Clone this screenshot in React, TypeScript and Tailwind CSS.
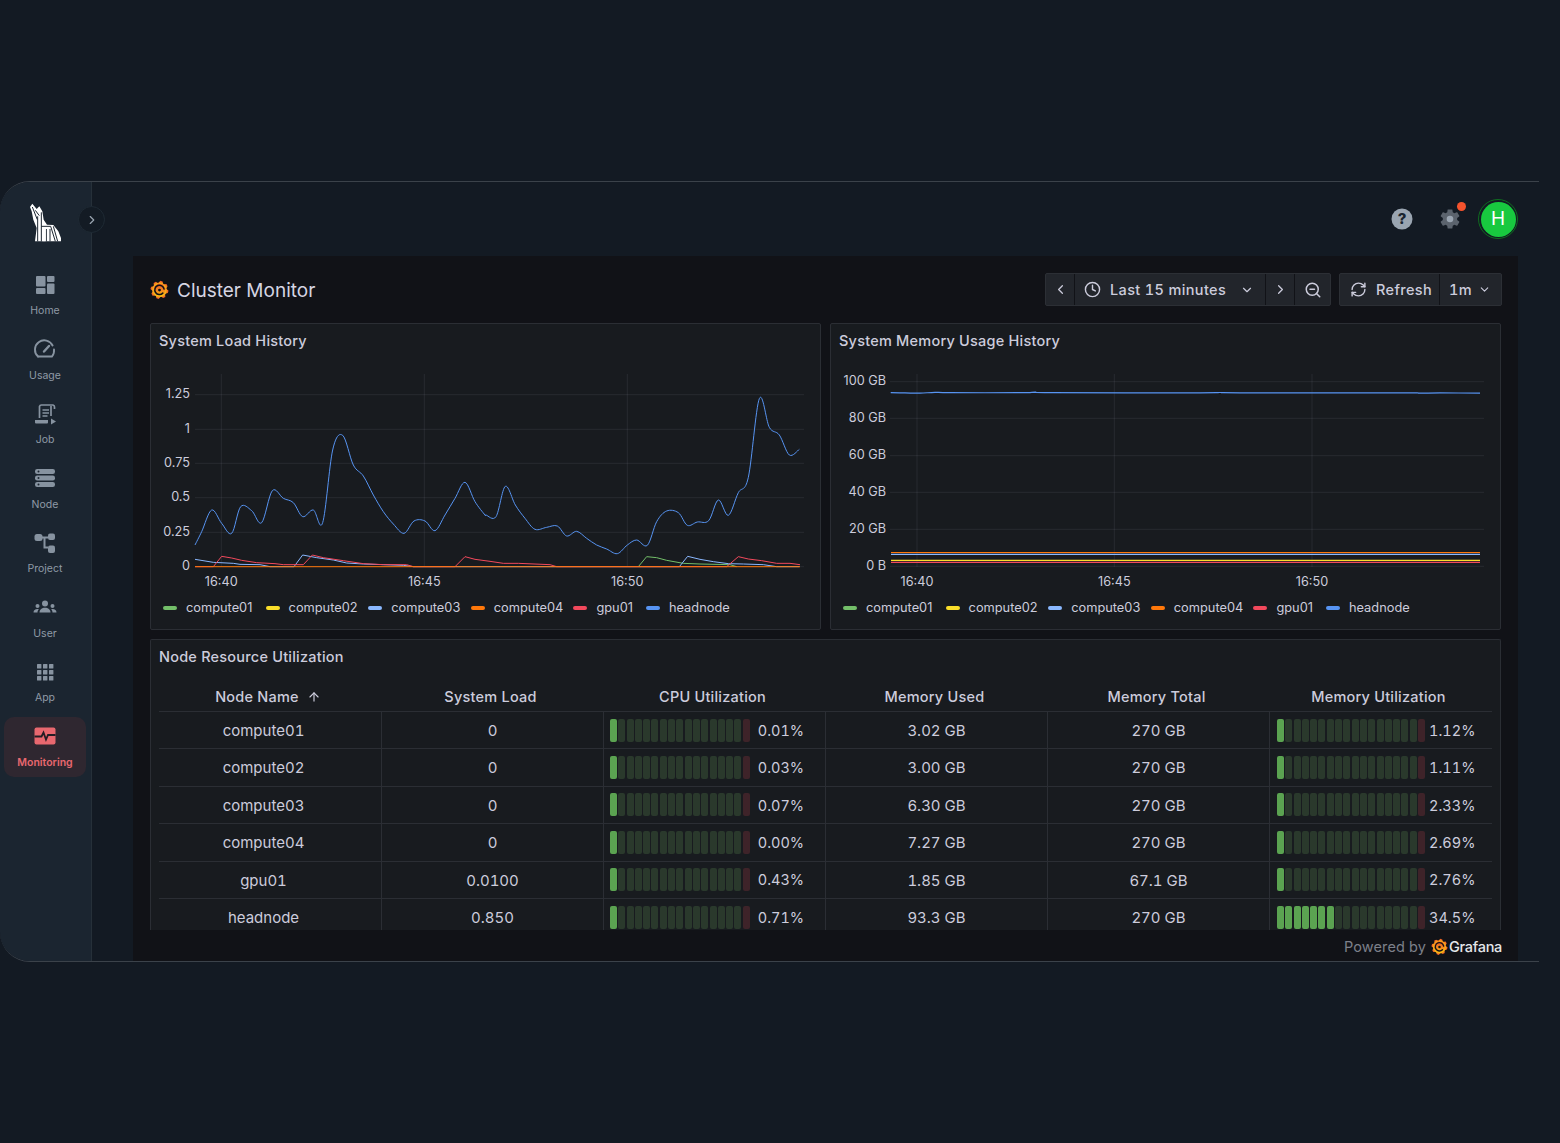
import { ChevronDown, ChevronLeft, ChevronRight, Clock, RefreshCw, ZoomOut, ArrowUp } from 'lucide-react';
import type { ReactNode } from 'react';

type Pt = [number, number];

const COLORS = {
  compute01: '#73bf69',
  compute02: '#fade2a',
  compute03: '#8ab8ff',
  compute04: '#ff780a',
  gpu01: '#f2495c',
  headnode: '#5794f2',
};

// points are read in two crops of the chart, mapped back to page coordinates
const a = (p: number[][]): Pt[] => p.map(([x, y]) => [x / 3 + 150, y / 3 + 370]);
const b = (p: number[][]): Pt[] => p.map(([x, y]) => [x / 3 + 480, y / 3 + 370]);

const headPts: Pt[] = [
  ...a([[135,525],[155,485],[185,420],[215,460],[245,490],[272,410],[305,422],[335,458],[367,362],[400,385],[430,398],[458,440],[490,420],[518,458],[548,240],[578,196],[610,285],[640,318],[670,375],[700,425],[730,462],[762,490],[792,453],[825,453],[855,482],[885,435],[915,385],[945,337],[975,395],[1005,435]]),
  ...b([[18,435],[48,440],[76,349],[106,405],[135,445],[165,478],[200,472],[232,468],[260,498],[290,484],[320,505],[350,525],[380,537],[412,551],[442,525],[470,510],[502,526],[530,455],[560,423],[595,428],[622,466],[652,456],[686,452],[715,390],[745,436],[775,368],[805,322],[838,86],[868,172],[898,195],[928,255],[958,238]]),
];

const gpuPts: Pt[] = [
  ...a([[135,590],[190,590],[215,559],[245,564],[275,571],[320,578],[375,581],[400,584],[460,584],[487,555],[520,563],[580,572],[640,581],[700,584],[770,584],[790,590],[915,590],[945,560],[975,568],[1020,574]]),
  ...b([[70,580],[115,580],[210,584],[230,590],[740,590],[775,560],[805,567],[845,572],[890,580],[930,580],[960,584]]),
];

const c3Pts: Pt[] = [
  ...a([[135,568],[190,577],[250,580],[270,583],[330,584],[360,590],[432,590],[458,555],[500,563],[550,570],[590,579],[640,582],[700,584],[760,586],[790,590]]),
  ...b([[598,590],[623,559],[660,568],[700,575],[745,581],[790,582],[850,584],[890,590],[958,590]]),
];

const c1Pts: Pt[] = b([[475,590],[500,560],[530,563],[560,571],[610,580],[660,582],[750,584],[770,590]]);

function smooth(pts: Pt[]) {
  let d = `M${pts[0][0]} ${pts[0][1]}`;
  for (let i = 0; i < pts.length - 1; i++) {
    const p0 = pts[i - 1] ?? pts[i];
    const p1 = pts[i];
    const p2 = pts[i + 1];
    const p3 = pts[i + 2] ?? p2;
    const c1x = p1[0] + (p2[0] - p0[0]) / 6;
    const c1y = p1[1] + (p2[1] - p0[1]) / 6;
    const c2x = p2[0] - (p3[0] - p1[0]) / 6;
    const c2y = p2[1] - (p3[1] - p1[1]) / 6;
    d += ` C${c1x} ${c1y} ${c2x} ${c2y} ${p2[0]} ${p2[1]}`;
  }
  return d;
}

const straight = (pts: Pt[]) => pts.map((p, i) => `${i ? 'L' : 'M'}${p[0]} ${p[1]}`).join(' ');

function GrafanaLogo({ size }: { size: number }) {
  const teeth = Array.from({ length: 8 }, (_, i) => i * 45 + 10);
  return (
    <svg width={size} height={size} viewBox="0 0 24 24" className="shrink-0">
      <defs>
        <linearGradient id="gf" x1="0.5" y1="0" x2="0.5" y2="1">
          <stop offset="0" stopColor="#ee4f2a" />
          <stop offset="0.55" stopColor="#f58a1f" />
          <stop offset="1" stopColor="#fbc50f" />
        </linearGradient>
      </defs>
      <g fill="url(#gf)">
        <circle cx="12" cy="12.5" r="9.3" />
        {teeth.map((t) => (
          <path key={t} d="M8.8 5 11 1 14 1.5 15.5 5Z" transform={`rotate(${t} 12 12.5)`} />
        ))}
      </g>
      <path d="M17.8 11.5a5.9 5.9 0 1 0-1.6 5.1" fill="none" stroke="#111217" strokeWidth="1.9" strokeLinecap="round" />
      <circle cx="12" cy="12.7" r="1.8" fill="#111217" />
    </svg>
  );
}

function WolfLogo() {
  return (
    <svg width="33" height="39" viewBox="87 100 99 117" className="shrink-0">
      <path d="M90 112 97 102 110 118 118 110 127 125 131 150 141 165 160 166 175 185 183 205 183 215H105L110 175 100 150 95 125Z" fill="#fff" />
      <g fill="none" stroke="#1b2530" strokeWidth="3">
        <path d="M97 112 112 150M106 122 118 138" />
        <path d="M113 140V215M124 128V215" />
        <path d="M124 170 152 170 166 215M139 178V215M150 178V215M160 170 173 215" />
      </g>
      <path d="M127 178H137V215H127Z" fill="#fff" />
    </svg>
  );
}

const icons: Record<string, ReactNode> = {
  Home: (
    <svg width="24" height="24" viewBox="0 0 24 24" fill="#8793a0"><rect x="3" y="3" width="9.5" height="10.5" rx="1" /><rect x="3" y="15" width="9.5" height="6" rx="1" /><rect x="14" y="3" width="7.5" height="6" rx="1" /><rect x="14" y="10.5" width="7.5" height="10.5" rx="1" /></svg>
  ),
  Usage: (
    <svg width="24" height="24" viewBox="0 0 24 24" fill="none" stroke="#8793a0" strokeWidth="1.9" strokeLinecap="round"><path d="M5 19.5a9.3 9.3 0 1 1 14.6-11" /><path d="M21 12.5a9 9 0 0 1-2 7H5" /><path d="m11 14.5 5-5.5" strokeWidth="2.4" /></svg>
  ),
  Job: (
    <svg width="24" height="24" viewBox="0 0 24 24" fill="none" stroke="#8793a0" strokeWidth="1.7"><path d="M6.5 16V4.5A2 2 0 0 1 8.5 3H20a2 2 0 0 1 1.5 2v2" /><path d="M9.5 8h6.5M9.5 11h6.5M9.5 14h5" /><path d="M2 18h13v2.5a1 1 0 0 1-1 1H3a1 1 0 0 1-1-1Z" fill="#8793a0" stroke="none" /><path d="m18 16.5 5 3-5 3Z" fill="#8793a0" stroke="none" /><path d="M18 14V4" /></svg>
  ),
  Node: (
    <svg width="24" height="24" viewBox="0 0 24 24" fill="#8793a0"><rect x="2" y="3" width="20" height="5" rx="2.2" /><rect x="2" y="9.5" width="20" height="5" rx="2.2" /><rect x="2" y="16" width="20" height="5" rx="2.2" /><g fill="#1b2530"><circle cx="5.5" cy="5.5" r="1" /><circle cx="5.5" cy="12" r="1" /><circle cx="5.5" cy="18.5" r="1" /></g></svg>
  ),
  Project: (
    <svg width="24" height="24" viewBox="0 0 24 24" fill="#8793a0"><rect x="1.5" y="3" width="8" height="7" rx="2.5" /><rect x="15" y="2.5" width="7" height="6.5" rx="2" /><rect x="15" y="14.5" width="7" height="7.5" rx="2" /><path d="M9 5.5h6v2h-2.5v8H15v2h-4.5V7.5H9Z" /></svg>
  ),
  User: (
    <svg width="24" height="24" viewBox="0 0 24 24" fill="#8793a0"><circle cx="12" cy="8.5" r="3" /><circle cx="4.5" cy="11" r="2" /><circle cx="19.5" cy="11" r="2" /><path d="M6.5 17.500c0-3 2.500-4.700 5.500-4.700s5.500 1.700 5.500 4.700Z" /><path d="M0.500 17.500c0-2 1.500-3.500 4-3.500.5 0 .9.100 1.300.2-.8.800-1.300 1.900-1.300 3.300Z" /><path d="M23.500 17.500c0-2-1.500-3.500-4-3.500-.5 0-.9.100-1.300.2.800.8 1.300 1.900 1.300 3.300Z" /></svg>
  ),
  App: (
    <svg width="24" height="24" viewBox="0 0 24 24" fill="#8793a0">
      {[4, 10, 16].map((y) => [4, 10, 16].map((x) => <rect key={`${x}-${y}`} x={x} y={y} width="4.4" height="4.4" rx="0.5" />))}
    </svg>
  ),
  Monitoring: (
    <svg width="24" height="24" viewBox="0 0 24 24"><rect x="1.500" y="3.500" width="21" height="17" rx="2" fill="#e8686f" /><path d="M1.500 12.500h7l2-4 2.500 7 2-4.500h7.500" fill="none" stroke="#221d24" strokeWidth="1.800" /></svg>
  ),
};

function SideItem({ label, active }: { label: string; active?: boolean }) {
  return (
    <div className={`ml-1 flex h-[60px] w-[82px] flex-col items-center justify-center gap-[7.5px] rounded-[10px] ${active ? 'bg-[#2f2730]' : ''}`}>
      {icons[label]}
      <span className={`text-[10.5px] leading-[14px] ${active ? 'font-semibold text-[#e8686f]' : 'text-[#8f9aa6]'}`}>{label}</span>
    </div>
  );
}

function Sidebar() {
  const items = ['Home', 'Usage', 'Job', 'Node', 'Project', 'User', 'App'];
  return (
    <aside className="relative flex w-[92px] shrink-0 flex-col border-r border-[#263039] bg-[#1b2530]">
      <div className="flex h-[74px] w-full items-center justify-center pt-[7px]">
        <WolfLogo />
      </div>
      <div className="flex flex-col gap-[4.5px] pt-[9.5px]">
        {items.map((i) => (
          <SideItem key={i} label={i} />
        ))}
        <SideItem label="Monitoring" active />
      </div>
      <div className="absolute top-[24px] left-[78px] flex h-[27px] w-[27px] items-center justify-center rounded-full border border-[#1f2a34] bg-[#131b24]">
        <ChevronRight size={14} className="text-[#9aa5b1]" />
      </div>
    </aside>
  );
}

function TopBar() {
  return (
    <header className="flex h-[74px] shrink-0 items-center justify-end gap-[25px] pr-[21px]">
      <svg width="24" height="24" viewBox="0 0 24 24" className="-mr-[1px]">
        <circle cx="12" cy="12" r="10.5" fill="#9aa5b1" />
        <text x="12" y="17" textAnchor="middle" fontSize="15" fontWeight="800" fill="#1b2530" fontFamily="Inter, sans-serif">?</text>
      </svg>
      <div className="relative">
        <svg width="24" height="24" viewBox="0 0 24 24" className="block">
          <path fill="#5b636d" d="M19.14 12.94c.04-.3.06-.61.06-.94 0-.32-.02-.64-.07-.94l2.03-1.58c.18-.14.23-.41.12-.61l-1.92-3.32c-.12-.22-.37-.29-.59-.22l-2.39.96c-.5-.38-1.03-.7-1.62-.94l-.36-2.54c-.04-.24-.24-.41-.48-.41h-3.84c-.24 0-.43.17-.47.41l-.36 2.54c-.59.24-1.13.57-1.62.94l-2.39-.96c-.22-.08-.47 0-.59.22L2.74 8.87c-.12.21-.08.47.12.61l2.03 1.58c-.05.3-.09.63-.09.94s.02.64.07.94l-2.03 1.58c-.18.14-.23.41-.12.61l1.92 3.32c.12.22.37.29.59.22l2.39-.96c.5.38 1.03.7 1.62.94l.36 2.54c.05.24.24.41.48.41h3.84c.24 0 .44-.17.47-.41l.36-2.54c.59-.24 1.13-.56 1.62-.94l2.39.96c.22.08.47 0 .59-.22l1.92-3.32c.12-.22.07-.47-.12-.61l-2.01-1.58z" />
          <circle cx="12" cy="12" r="3.3" fill="#9aa5b1" />
        </svg>
        <span className="absolute -top-[5px] -right-[4px] h-[9px] w-[9px] rounded-full bg-[#f5532d]" />
      </div>
      <div className="-ml-[9px] flex h-[40px] w-[40px] items-center justify-center rounded-full border border-[#0f6b20] p-[1.5px]">
        <div className="flex h-full w-full items-center justify-center rounded-full bg-[#18c93f] text-[19px] text-white">H</div>
      </div>
    </header>
  );
}

function ToolCell({ children, className = '' }: { children: ReactNode; className?: string }) {
  return <div className={`flex h-full items-center border-l border-[#111217] first:border-l-0 ${className}`}>{children}</div>;
}

function DashHeader() {
  return (
    <div className="flex h-[67px] shrink-0 items-center justify-between text-[#ccccdc]">
      <div className="flex items-center gap-[8px]">
        <GrafanaLogo size={19} />
        <h1 className="pt-[2px] text-[19px] leading-none font-normal text-[#d5d5e3]">Cluster Monitor</h1>
      </div>
      <div className="-mr-[1px] flex items-center gap-[8px] text-[14.5px] font-medium tracking-[0.35px] tabular-nums">
        <div className="flex h-[33px] w-[286px] rounded-[2px] border border-[#2c2f35] bg-[#22252b]">
          <ToolCell className="w-[28px] justify-center"><ChevronLeft size={15} /></ToolCell>
          <ToolCell className="w-[191px] justify-between pr-[11px] pl-[9px]">
            <span className="flex items-center gap-[9px]"><Clock size={17} />Last 15 minutes</span>
            <ChevronDown size={14} />
          </ToolCell>
          <ToolCell className="w-[29px] justify-center"><ChevronRight size={15} /></ToolCell>
          <ToolCell className="flex-1 justify-center"><ZoomOut size={18} /></ToolCell>
        </div>
        <div className="flex h-[33px] w-[163px] rounded-[2px] border border-[#2c2f35] bg-[#22252b]">
          <ToolCell className="w-[99px] gap-[9px] pl-[10px]"><RefreshCw size={17} />Refresh</ToolCell>
          <ToolCell className="flex-1 justify-between pr-[10px] pl-[9px]">1m<ChevronDown size={13} /></ToolCell>
        </div>
      </div>
    </div>
  );
}

function Legend() {
  const names = Object.entries(COLORS);
  return (
    <div className="flex h-[32px] items-center gap-[10.6px] pl-[12px]">
      {names.map(([n, c]) => (
        <div key={n} className="flex items-center gap-[9px]">
          <span className="h-[4px] w-[14px] rounded-full" style={{ background: c }} />
          <span className={`text-[12.8px] whitespace-nowrap text-[#ccccdc] ${n === 'gpu01' ? 'w-[39px]' : n === 'headnode' ? 'w-[61px]' : 'w-[69px]'}`}>{n}</span>
        </div>
      ))}
    </div>
  );
}

const GRID = 'rgba(204,204,220,0.09)';

function ChartText({ x, y, anchor, children }: { x: number; y: number; anchor: 'end' | 'middle'; children: string }) {
  return (
    <text x={x} y={y} textAnchor={anchor} fontSize="12.7" fill="#ccccdc" dominantBaseline="central" fontFamily="Inter, sans-serif">
      {children}
    </text>
  );
}

function LoadChart() {
  const ys: [number, string][] = [[394.7, '1.25'], [429.3, '1'], [463.3, '0.75'], [497.7, '0.5'], [532.3, '0.25'], [566.7, '0']];
  const xs: [number, string][] = [[221.3, '16:40'], [424.3, '16:45'], [627.3, '16:50']];
  return (
    <svg viewBox="151 362 669 230" className="block h-[230px] w-[669px]">
      {ys.map(([y, l]) => (
        <g key={l}>
          <line x1="195" x2="804" y1={y} y2={y} stroke={GRID} />
          <ChartText x={190} y={y - 1.3} anchor="end">{l}</ChartText>
        </g>
      ))}
      {xs.map(([x, l]) => (
        <g key={l}>
          <line x1={x} x2={x} y1="374" y2="567" stroke={GRID} />
          <ChartText x={x} y={581} anchor="middle">{l}</ChartText>
        </g>
      ))}
      <g fill="none" strokeWidth="1" strokeLinejoin="round">
        <path d={straight(c1Pts)} stroke={COLORS.compute01} />
        <path d={straight(c3Pts)} stroke={COLORS.compute03} />
        <path d={straight(gpuPts)} stroke={COLORS.gpu01} />
        <path d="M195 566.7H800" stroke={COLORS.compute04} />
        <path d={smooth(headPts)} stroke={COLORS.headnode} />
      </g>
    </svg>
  );
}

function MemoryChart() {
  const ys: [number, string][] = [[381.7, '100 GB'], [418.3, '80 GB'], [455.7, '60 GB'], [492.3, '40 GB'], [529.3, '20 GB'], [566.3, '0 B']];
  const xs: [number, string][] = [[917, '16:40'], [1114.3, '16:45'], [1312, '16:50']];
  const top = smooth([[890.7, 392.7], [905, 392.9], [920, 393.2], [935, 392.3], [950, 392.7], [1020, 392.7], [1035, 392.2], [1050, 392.7], [1200, 392.8], [1220, 392.5], [1240, 392.8], [1400, 392.8], [1420, 393.2], [1440, 392.9], [1480, 393.2]]);
  return (
    <svg viewBox="831 362 669 230" className="block h-[230px] w-[669px]">
      {ys.map(([y, l]) => (
        <g key={l}>
          <line x1="890" x2="1484" y1={y} y2={y} stroke={GRID} />
          <ChartText x={886} y={y - 1.3} anchor="end">{l}</ChartText>
        </g>
      ))}
      {xs.map(([x, l]) => (
        <g key={l}>
          <line x1={x} x2={x} y1="374" y2="567" stroke={GRID} />
          <ChartText x={x} y={581} anchor="middle">{l}</ChartText>
        </g>
      ))}
      <g fill="none" strokeWidth="1.2">
        <path d="M891 552.5H1480" stroke={COLORS.compute04} />
        <path d="M891 554.4H1480" stroke={COLORS.compute03} />
        <path d="M891 560.4H1480" stroke={COLORS.compute02} />
        <path d="M891 562.4H1480" stroke={COLORS.gpu01} />
        <path d={top} stroke={COLORS.headnode} />
      </g>
    </svg>
  );
}

function ChartPanel({ title, children }: { title: string; children: ReactNode }) {
  return (
    <section className="h-[307px] w-[671px] rounded-[2px] border border-[#2b2e34] bg-[#181b1f]">
      <h2 className="flex h-[38px] items-center px-2 pb-[4px] text-[14.5px] font-medium tracking-[0.22px] text-[#ccccdc]">{title}</h2>
      {children}
      <Legend />
    </section>
  );
}

function Gauge({ segments, pct, value, pad, gap }: { segments: number; pct: number; value: string; pad: string; gap: string }) {
  const lit = Math.max(1, Math.round((pct / 100) * segments + 0.45));
  return (
    <div className={`flex items-center ${pad}`}>
      <div className="flex gap-[1.3px]">
        {Array.from({ length: segments }, (_, i) => {
          const on = i < lit;
          const last = i === segments - 1;
          return <span key={i} className={`h-[23px] w-[7px] rounded-[2px] ${on ? 'bg-[#5ba351]' : last ? 'bg-[#3e2329]' : 'bg-[#2a392c]'}`} />;
        })}
      </div>
      <span className={`${gap} pt-[1px] text-[14.5px] text-[#ccccdc] tabular-nums`}>{value}</span>
    </div>
  );
}

const rows = [
  { name: 'compute01', load: '0', cpu: 0.01, used: '3.02 GB', total: '270 GB', mem: 1.12 },
  { name: 'compute02', load: '0', cpu: 0.03, used: '3.00 GB', total: '270 GB', mem: 1.11 },
  { name: 'compute03', load: '0', cpu: 0.07, used: '6.30 GB', total: '270 GB', mem: 2.33 },
  { name: 'compute04', load: '0', cpu: 0.0, used: '7.27 GB', total: '270 GB', mem: 2.69 },
  { name: 'gpu01', load: '0.0100', cpu: 0.43, used: '1.85 GB', total: '67.1 GB', mem: 2.76 },
  { name: 'headnode', load: '0.850', cpu: 0.71, used: '93.3 GB', total: '270 GB', mem: 34.5 },
];

const cell = 'flex h-full w-[222px] shrink-0 items-center border-l border-[#2b2e34] first:border-l-0';

function NodeTable() {
  return (
    <section className="h-[291px] w-[1351px] overflow-hidden rounded-t-[2px] border-x border-t border-[#2b2e34] bg-[#181b1f]">
      <h2 className="flex h-[36px] items-center px-2 pb-[2px] text-[14.5px] font-medium tracking-[0.22px] text-[#ccccdc]">Node Resource Utilization</h2>
      <div className="px-2 pt-[7px] text-[15px] text-[#ccccdc] tabular-nums">
        <div className="flex h-[29px] w-[1333px] items-center border-b border-[#2b2e34] text-[14.5px] font-medium tracking-[0.22px]">
          <div className="flex w-[222px] shrink-0 items-center justify-center gap-[8px] pr-[4px]">Node Name<ArrowUp size={14} /></div>
          {['System Load', 'CPU Utilization', 'Memory Used', 'Memory Total', 'Memory Utilization'].map((h) => (
            <div key={h} className="w-[222px] shrink-0 pr-[3px] text-center">{h}</div>
          ))}
        </div>
        {rows.map((r) => (
          <div key={r.name} className="flex h-[37.4px] w-[1333px] items-center border-b border-[#2b2e34]">
            <div className={`${cell} justify-center pt-[2px] pr-[13px]`}>{r.name}</div>
            <div className={`${cell} justify-center pt-[2px]`}>{r.load}</div>
            <div className={cell}><Gauge segments={17} pct={r.cpu} pad="pl-[6px]" gap="ml-[8px]" value={`${r.cpu.toFixed(2)}%`} /></div>
            <div className={`${cell} justify-center pt-[2px]`}>{r.used}</div>
            <div className={`${cell} justify-center pt-[2px]`}>{r.total}</div>
            <div className={cell}><Gauge segments={18} pct={r.mem} pad="pl-[7px]" gap="ml-[4px]" value={r.mem >= 10 ? `${r.mem.toFixed(1)}%` : `${r.mem.toFixed(2)}%`} /></div>
          </div>
        ))}
      </div>
    </section>
  );
}

export default function App() {
  return (
    <div className="min-h-[1143px] bg-[#131a23] pt-[181px] font-['Inter',sans-serif]">
      <div className="flex h-[781px] w-[1539px] overflow-hidden rounded-l-[30px] border-y border-[#3b424a]">
        <Sidebar />
        <main className="flex min-w-0 flex-1 flex-col">
          <TopBar />
          <div className="mr-[21px] ml-[41px] flex flex-1 flex-col overflow-hidden bg-[#111217] px-[17px]">
            <DashHeader />
            <div className="flex gap-[9px]">
              <ChartPanel title="System Load History"><LoadChart /></ChartPanel>
              <ChartPanel title="System Memory Usage History"><MemoryChart /></ChartPanel>
            </div>
            <div className="mt-[9px]"><NodeTable /></div>
            <div className="-mr-[1px] flex flex-1 items-center justify-end pt-[2px]">
              <span className="text-[14.5px] tracking-[0.1px] text-[#7d808a]">Powered by</span>
              <span className="mr-[1px] ml-[5px]"><GrafanaLogo size={17} /></span>
              <span className="text-[14.5px] font-medium tracking-[-0.3px] text-[#e4e6ea]">Grafana</span>
            </div>
          </div>
        </main>
      </div>
    </div>
  );
}
